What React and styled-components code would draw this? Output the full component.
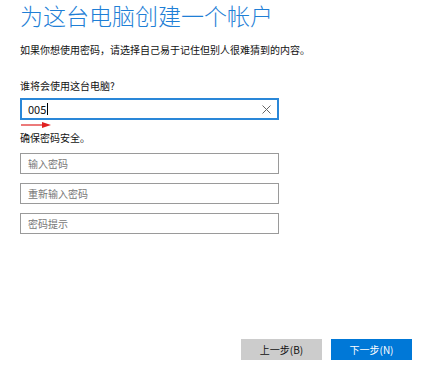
import React from "react";
import styled, { createGlobalStyle } from "styled-components";

const Global = createGlobalStyle`
  html, body { margin: 0; padding: 0; background: #fff; }
  body { font-family: "Noto Sans CJK SC", "Noto Sans", sans-serif; }
  #root { height: 369px; }
`;

const Page = styled.div`
  height: 369px;
  box-sizing: border-box;
  display: flex;
  flex-direction: column;
  padding: 0 9px 9px 20px;
  color: #000;
`;

const Title = styled.h1`
  margin: 0;
  font-size: 23px;
  line-height: 30px;
  font-weight: 300;
  color: #1f7fd6;
`;

const Text = styled.p`
  margin: ${(p) => p.$mt || 0}px 0 0 0;
  font-size: 10px;
  line-height: 14px;
  color: #111;
`;

const Field = styled.div`
  box-sizing: border-box;
  width: 259px;
  height: ${(p) => (p.$active ? 22 : 21)}px;
  margin-top: ${(p) => p.$mt || 0}px;
  border: ${(p) => (p.$active ? "2px solid #2a87d8" : "1px solid #9a9a9a")};
  display: flex;
  align-items: center;
  padding-left: ${(p) => (p.$active ? 6 : 7)}px;
  padding-right: 6px;
  font-size: ${(p) => (p.$active ? 11 : 10)}px;
  color: ${(p) => (p.$active ? "#111" : "#777")};
`;

const Value = styled.span`
  flex: 1;
  display: flex;
  align-items: center;
`;

const Caret = styled.span`
  display: inline-block;
  width: 1px;
  height: 12px;
  background: #000;
  margin-left: 1px;
`;

const Clear = styled.svg`
  width: 9px;
  height: 9px;
`;

const Arrow = styled.svg`
  display: block;
  width: 32px;
  height: 8px;
  margin-top: 1px;
`;

const Footer = styled.div`
  margin-top: auto;
  display: flex;
  justify-content: flex-end;
  gap: 9px;
`;

const Button = styled.div`
  width: 81px;
  height: 21px;
  display: flex;
  align-items: center;
  justify-content: center;
  font-size: 10px;
  background: ${(p) => (p.$primary ? "#0078d7" : "#cccccc")};
  color: ${(p) => (p.$primary ? "#fff" : "#111")};
`;

export default function App() {
  return (
    <>
      <Global />
      <Page>
        <Title>为这台电脑创建一个帐户</Title>
        <Text $mt={13}>如果你想使用密码，请选择自己易于记住但别人很难猜到的内容。</Text>
        <Text $mt={22}>谁将会使用这台电脑?</Text>
        <Field $active $mt={5}>
          <Value>
            005
            <Caret />
          </Value>
          <Clear viewBox="0 0 9 9">
            <path d="M0.5 0.5 L8.5 8.5 M8.5 0.5 L0.5 8.5" stroke="#666" strokeWidth="1" fill="none" />
          </Clear>
        </Field>
        <Arrow viewBox="0 0 32 8">
          <line x1="1" y1="4" x2="24" y2="4" stroke="#e02020" strokeWidth="1.2" />
          <polygon points="22,1 31,4 22,7" fill="#e02020" />
        </Arrow>
        <Text $mt={2}>确保密码安全。</Text>
        <Field $mt={8}>输入密码</Field>
        <Field $mt={9}>重新输入密码</Field>
        <Field $mt={9}>密码提示</Field>
        <Footer>
          <Button>上一步(B)</Button>
          <Button $primary>下一步(N)</Button>
        </Footer>
      </Page>
    </>
  );
}
